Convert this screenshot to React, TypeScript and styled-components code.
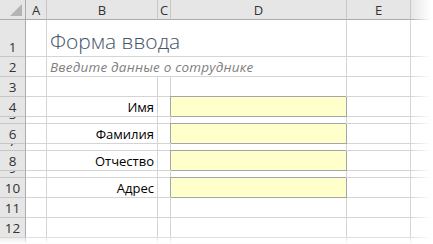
import styled, { createGlobalStyle } from "styled-components";

const GlobalStyle = createGlobalStyle`
  html,
  body {
    margin: 0;
    padding: 0;
    background: #fff;
  }

  body {
    font-family: "Open Sans", "Liberation Sans", sans-serif;
  }
`;

const Sheet = styled.div`
  position: relative;
  width: 433px;
  height: 244px;
  overflow: hidden;

  display: grid;
  grid-template-columns: 26px 21px 111px 13px 176px 64px 1fr;
  grid-template-rows: 20px 37px 20px 20px 20px 7px 20px 7px 20px 7px 20px 20px 20px 1fr;
`;

const Corner = styled.div`
  background: #e6e6e6;
  border-right: 1px solid #ababab;
  border-bottom: 1px solid #ababab;
  box-sizing: border-box;

  display: flex;
  align-items: flex-end;
  justify-content: flex-end;
  padding: 0 3px 3px 0;
`;

const ColHead = styled.div<{ $last?: boolean }>`
  background: #e6e6e6;
  border-right: ${(p) => (p.$last ? "none" : "1px solid #c6c6c6")};
  border-bottom: 1px solid #ababab;
  box-sizing: border-box;

  display: flex;
  align-items: center;
  justify-content: center;

  font-size: 13px;
  color: #333;
`;

const RowHead = styled.div`
  background: #e6e6e6;
  border-right: 1px solid #ababab;
  border-bottom: 1px solid #c6c6c6;
  box-sizing: border-box;
  overflow: hidden;

  display: flex;
  align-items: flex-end;
  justify-content: center;

  font-size: 13.5px;
  line-height: 17px;
  color: #333;
`;

const Cell = styled.div<{ $last?: boolean }>`
  border-right: ${(p) => (p.$last ? "none" : "1px solid #d4d4d4")};
  border-bottom: 1px solid #d4d4d4;
  box-sizing: border-box;
  overflow: hidden;
`;

const WideCell = styled(Cell)`
  grid-column: span 3;
  overflow: visible;
  white-space: nowrap;

  display: flex;
  align-items: flex-end;
  padding-left: 3px;
`;

const Title = styled.span`
  font-size: 21px;
  font-weight: 300;
  line-height: 28px;
  color: #44546a;
  padding-bottom: 1px;
`;

const Subtitle = styled.span`
  font-size: 13.5px;
  font-style: italic;
  line-height: 18px;
  color: #7f7f7f;
  letter-spacing: 0.2px;
`;

const Label = styled(Cell)`
  display: flex;
  align-items: flex-end;
  justify-content: flex-end;
  padding-right: 3px;

  font-size: 13px;
  line-height: 18px;
  color: #000;
`;

const Input = styled(Cell)`
  background: #ffffcc;
  border-right-color: #a5a5a5;
  border-bottom-color: #a5a5a5;
  box-shadow: -1px -1px 0 #a5a5a5;
  overflow: visible;
`;

const FadeRight = styled.div`
  position: absolute;
  top: 0;
  right: 0;
  width: 23px;
  height: 100%;
  pointer-events: none;
  background: linear-gradient(to right, rgba(255, 255, 255, 0), #fff 90%);
`;

const FadeBottom = styled.div`
  position: absolute;
  left: 0;
  bottom: 0;
  width: 100%;
  height: 7px;
  pointer-events: none;
  background: linear-gradient(to bottom, rgba(255, 255, 255, 0.2), #fff);
`;

type Row = {
  n: number;
  title?: string;
  subtitle?: string;
  label?: string;
  hidden?: boolean;
};

const rows: Row[] = [
  { n: 1, title: "Форма ввода" },
  { n: 2, subtitle: "Введите данные о сотруднике" },
  { n: 3 },
  { n: 4, label: "Имя" },
  { n: 5 },
  { n: 6, label: "Фамилия" },
  { n: 7 },
  { n: 8, label: "Отчество" },
  { n: 9 },
  { n: 10, label: "Адрес" },
  { n: 11 },
  { n: 12 },
  // last row is cut by the fade, number not visible
  { n: 13, hidden: true },
];

const columns = ["A", "B", "C", "D", "E", ""];

const SheetRow = ({ row }: { row: Row }) => {
  const wide = row.title || row.subtitle;
  return (
    <>
      <RowHead>{row.hidden ? "" : row.n}</RowHead>
      <Cell />
      {wide ? (
        <WideCell>
          {row.title && <Title>{row.title}</Title>}
          {row.subtitle && <Subtitle>{row.subtitle}</Subtitle>}
        </WideCell>
      ) : (
        <>
          {row.label ? <Label>{row.label}</Label> : <Cell />}
          <Cell />
          {row.label ? <Input /> : <Cell />}
        </>
      )}
      <Cell />
      <Cell $last />
    </>
  );
};

const App = () => {
  return (
    <>
      <GlobalStyle />
      <Sheet>
        <Corner>
          <svg width="12" height="12" viewBox="0 0 12 12">
            <polygon points="12,0 12,12 0,12" fill="#b4b4b4" />
          </svg>
        </Corner>
        {columns.map((c, i) => (
          <ColHead key={i} $last={i === columns.length - 1}>
            {c}
          </ColHead>
        ))}
        {rows.map((r) => (
          <SheetRow key={r.n} row={r} />
        ))}
        <FadeRight />
        <FadeBottom />
      </Sheet>
    </>
  );
};

export default App;
